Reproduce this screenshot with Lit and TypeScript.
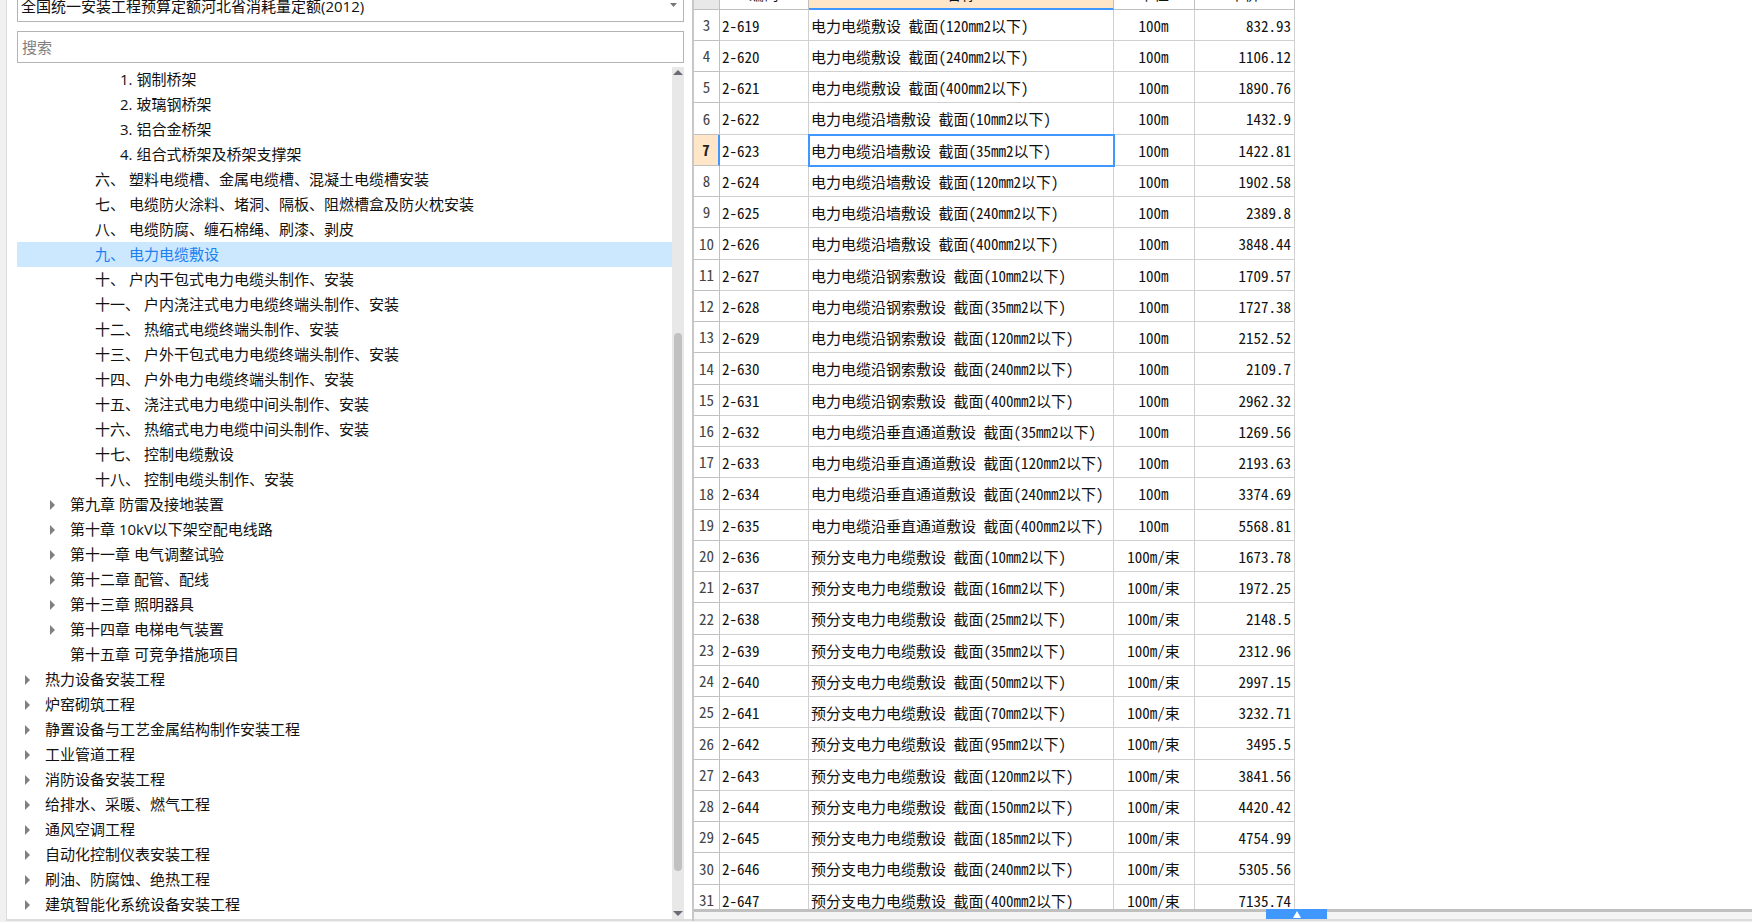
import { LitElement, html, css, svg } from "lit";
import { customElement, state } from "lit/decorators.js";
import { classMap } from "lit/directives/class-map.js";

interface TreeNode {
  label: string;
  level: number;
  expandable: boolean;
}

const node = (level: number, label: string, expandable = false): TreeNode => ({ level, label, expandable });

const TREE: TreeNode[] = [
  node(4, "1. 钢制桥架"),
  node(4, "2. 玻璃钢桥架"),
  node(4, "3. 铝合金桥架"),
  node(4, "4. 组合式桥架及桥架支撑架"),
  node(3, "六、 塑料电缆槽、金属电缆槽、混凝土电缆槽安装"),
  node(3, "七、 电缆防火涂料、堵洞、隔板、阻燃槽盒及防火枕安装"),
  node(3, "八、 电缆防腐、缠石棉绳、刷漆、剥皮"),
  node(3, "九、 电力电缆敷设"),
  node(3, "十、 户内干包式电力电缆头制作、安装"),
  node(3, "十一、 户内浇注式电力电缆终端头制作、安装"),
  node(3, "十二、 热缩式电缆终端头制作、安装"),
  node(3, "十三、 户外干包式电力电缆终端头制作、安装"),
  node(3, "十四、 户外电力电缆终端头制作、安装"),
  node(3, "十五、 浇注式电力电缆中间头制作、安装"),
  node(3, "十六、 热缩式电力电缆中间头制作、安装"),
  node(3, "十七、 控制电缆敷设"),
  node(3, "十八、 控制电缆头制作、安装"),
  node(2, "第九章 防雷及接地装置", true),
  node(2, "第十章 10kV以下架空配电线路", true),
  node(2, "第十一章 电气调整试验", true),
  node(2, "第十二章 配管、配线", true),
  node(2, "第十三章 照明器具", true),
  node(2, "第十四章 电梯电气装置", true),
  node(2, "第十五章 可竞争措施项目"),
  node(1, "热力设备安装工程", true),
  node(1, "炉窑砌筑工程", true),
  node(1, "静置设备与工艺金属结构制作安装工程", true),
  node(1, "工业管道工程", true),
  node(1, "消防设备安装工程", true),
  node(1, "给排水、采暖、燃气工程", true),
  node(1, "通风空调工程", true),
  node(1, "自动化控制仪表安装工程", true),
  node(1, "刷油、防腐蚀、绝热工程", true),
  node(1, "建筑智能化系统设备安装工程", true),
];

interface Quota {
  code: string;
  name: string;
  unit: string;
  price: string;
}

const group = (prefix: string, unit: string, first: number, items: [number, string][]): Quota[] =>
  items.map(([size, price], i) => ({
    code: `2-${first + i}`,
    name: `${prefix}敷设 截面(${size}mm2以下)`,
    unit,
    price,
  }));

const QUOTAS: Quota[] = [
  ...group("电力电缆", "100m", 619, [[120, "832.93"], [240, "1106.12"], [400, "1890.76"]]),
  ...group("电力电缆沿墙", "100m", 622, [[10, "1432.9"], [35, "1422.81"], [120, "1902.58"], [240, "2389.8"], [400, "3848.44"]]),
  ...group("电力电缆沿钢索", "100m", 627, [[10, "1709.57"], [35, "1727.38"], [120, "2152.52"], [240, "2109.7"], [400, "2962.32"]]),
  ...group("电力电缆沿垂直通道", "100m", 632, [[35, "1269.56"], [120, "2193.63"], [240, "3374.69"], [400, "5568.81"]]),
  ...group("预分支电力电缆", "100m/束", 636, [
    [10, "1673.78"], [16, "1972.25"], [25, "2148.5"], [35, "2312.96"], [50, "2997.15"], [70, "3232.71"],
    [95, "3495.5"], [120, "3841.56"], [150, "4420.42"], [185, "4754.99"], [240, "5305.56"], [400, "7135.74"],
  ]),
];

const FIRST_ROW = 3;

@customElement("quota-tree")
export class QuotaTree extends LitElement {
  static styles = css`
    :host {
      display: flex;
      flex-direction: column;
      min-height: 0;
      padding: 0 8px 0 10px;
      background: #fff;
      border: 1px solid #dcdcdc;
      border-width: 0 0 2px 1px;
      box-sizing: border-box;
      overflow: hidden;
      font: 15px/25px "Open Sans", "Noto Sans CJK SC", sans-serif;
      color: #111;
    }
    .picker {
      display: flex;
      flex: none;
      height: 31px;
      margin-top: -9px;
      position: relative;
    }
    .picker select {
      flex: 1;
      appearance: none;
      box-sizing: border-box;
      padding: 0 24px 1px 3px;
      border: 1px solid #b4b4b4;
      border-radius: 0;
      background: #fff;
      color: inherit;
      font: inherit;
    }
    .picker svg {
      position: absolute;
      right: 7px;
      top: 12px;
      fill: #777;
    }
    .search {
      flex: none;
      height: 32px;
      box-sizing: border-box;
      margin: 9px 0 4px;
      padding: 0 4px;
      border: 1px solid #b4b4b4;
      font: inherit;
      outline: none;
    }
    .search::placeholder {
      color: #808080;
      opacity: 1;
    }
    .body {
      display: flex;
      flex: 1;
      min-height: 0;
    }
    .list {
      flex: 1;
      margin: 0;
      padding: 0;
      list-style: none;
      overflow: hidden;
    }
    .item {
      display: flex;
      width: 100%;
      height: 25px;
      align-items: center;
      padding: 0;
      border: 0;
      background: none;
      color: inherit;
      font: inherit;
      text-align: left;
      white-space: nowrap;
      cursor: default;
    }
    .selected {
      background: #cce8ff;
      color: #2080f0;
    }
    .level1 { padding-left: 8px; }
    .level2 { padding-left: 33px; }
    .level3 { padding-left: 58px; }
    .level4 { padding-left: 83px; }
    .twisty {
      flex: none;
      width: 20px;
      height: 10px;
      fill: #808080;
    }
    .bar {
      display: flex;
      flex-direction: column;
      flex: none;
      width: 12px;
      background: #e8e8e8;
      align-items: center;
    }
    .bar svg {
      flex: none;
      fill: #6b6b75;
      margin: 3px 0;
    }
    .track {
      flex: 1;
      width: 8px;
      display: flex;
      flex-direction: column;
    }
    .before { flex: 255; }
    .thumb {
      flex: 538;
      border-radius: 4px;
      background: #c1c1c1;
    }
    .after { flex: 37; }
  `;

  @state() private selected = 7;

  render() {
    return html`
      <div class="picker">
        <select aria-label="定额库">
          <option>全国统一安装工程预算定额河北省消耗量定额(2012)</option>
        </select>
        <svg width="7" height="4" viewBox="0 0 7 4"><path d="M0 0h7L3.5 4z" /></svg>
      </div>
      <input class="search" type="text" placeholder="搜索" aria-label="搜索" />
      <div class="body">
        <ul class="list">
          ${TREE.map(
            (n, i) => html`<li>
              <button
                class=${classMap({ item: true, selected: i === this.selected, [`level${n.level}`]: true })}
                @click=${() => (this.selected = i)}
              >
                <svg class="twisty" viewBox="0 0 20 10">${n.expandable ? svg`<path d="M0 0L5 5L0 10z" />` : ""}</svg>
                ${n.label}
              </button>
            </li>`
          )}
        </ul>
        <div class="bar">
          <svg width="10" height="5" viewBox="0 0 10 5"><path d="M0 5L5 0L10 5z" /></svg>
          <div class="track">
            <div class="before"></div>
            <div class="thumb"></div>
            <div class="after"></div>
          </div>
          <svg width="10" height="5" viewBox="0 0 10 5"><path d="M0 0h10L5 5z" /></svg>
        </div>
      </div>
    `;
  }
}

@customElement("quota-grid")
export class QuotaGrid extends LitElement {
  static styles = css`
    :host {
      display: flex;
      flex-direction: column;
      min-width: 0;
      min-height: 0;
      background: #f4f4f4;
      border: 2px solid #c8c8c8;
      border-width: 0 0 0 2px;
      box-sizing: border-box;
      font: 15px/20px "Noto Sans CJK SC", sans-serif;
      color: #111;
    }
    .view {
      flex: 1;
      min-height: 0;
      overflow: hidden;
      background: #fff;
      border-bottom: 3px solid #c0c0c0;
    }
    table {
      width: 601px;
      margin-top: -21px;
      table-layout: fixed;
      border-collapse: separate;
      border-spacing: 0;
    }
    .no { width: 26px; }
    .code { width: 89px; }
    .name { width: 305px; }
    .unit { width: 81px; }
    th,
    td {
      box-sizing: border-box;
      height: 31px;
      padding: 1px 3px 0 2px;
      border: 1px solid #d0d0d0;
      border-width: 0 1px 1px 0;
      font-weight: 400;
      text-align: left;
      white-space: nowrap;
      overflow: hidden;
      font-feature-settings: "hwid";
    }
    tbody tr:nth-child(4n) > * {
      height: 32px;
    }
    thead th {
      padding: 0;
      text-align: center;
      border-color: #c0c0c0;
    }
    thead .corner { background: #e8e8e8; }
    thead .active {
      background: #ffe6c8;
      border-bottom: 2px solid #4098ff;
    }
    tbody th {
      padding: 0;
      border-color: #c0c0c0;
      color: #444;
      text-align: center;
    }
    tbody .current {
      background: #ffe6c8;
      border-right: 2px solid #4098ff;
      color: #222;
      font-weight: 700;
    }
    .center { text-align: center; }
    .right { text-align: right; }
    .focus {
      outline: 2px solid #4098ff;
      outline-offset: -1px;
    }
    .foot {
      flex: none;
      height: 7px;
      display: grid;
      grid-template-columns: 573fr 61px 425fr;
      border-bottom: 2px solid #dcdcdc;
    }
    .expand {
      grid-column: 2;
      display: flex;
      align-items: center;
      justify-content: center;
      position: relative;
      top: -3px;
      height: 10px;
      padding: 0;
      border: 0;
      background: #4098ff;
    }
    .expand svg { fill: #fff; }
  `;

  @state() private current = 7;

  render() {
    return html`
      <div class="view">
        <table>
          <colgroup>
            <col class="no" />
            <col class="code" />
            <col class="name" />
            <col class="unit" />
            <col />
          </colgroup>
          <thead>
            <tr>
              <th class="corner"></th>
              <th scope="col">编码</th>
              <th scope="col" class="active">名称</th>
              <th scope="col">单位</th>
              <th scope="col">单价</th>
            </tr>
          </thead>
          <tbody>
            ${QUOTAS.map((q, i) => {
              const n = i + FIRST_ROW;
              const on = n === this.current;
              return html`<tr @click=${() => (this.current = n)}>
                <th scope="row" class=${classMap({ current: on })}>${n}</th>
                <td>${q.code}</td>
                <td class=${classMap({ focus: on })}>${q.name}</td>
                <td class="center">${q.unit}</td>
                <td class="right">${q.price}</td>
              </tr>`;
            })}
          </tbody>
        </table>
      </div>
      <div class="foot">
        <button class="expand" aria-label="展开">
          <svg width="8" height="7" viewBox="0 0 8 7"><path d="M4 0L8 7H0z" /></svg>
        </button>
      </div>
    `;
  }
}

@customElement("app-root")
export class AppRoot extends LitElement {
  static styles = css`
    :host {
      display: grid;
      grid-template-columns: minmax(0, 686fr) minmax(0, 1060fr);
      grid-template-rows: minmax(0, 1fr);
      height: 100vh;
      box-sizing: border-box;
      padding: 0 0 1px 6px;
      background: #f0f0f0;
    }
  `;

  render() {
    return html`<quota-tree></quota-tree><quota-grid></quota-grid>`;
  }
}
